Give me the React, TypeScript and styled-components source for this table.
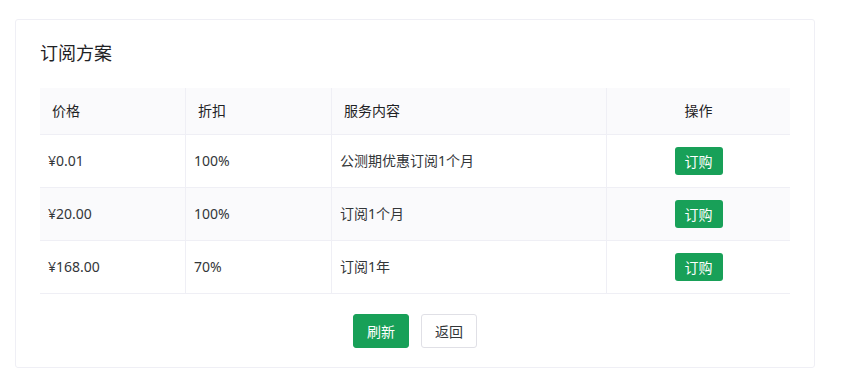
import styled, { createGlobalStyle } from 'styled-components'

interface Plan {
  price: string
  discount: string
  content: string
}

const plans: Plan[] = [
  { price: '¥0.01', discount: '100%', content: '公测期优惠订阅1个月' },
  { price: '¥20.00', discount: '100%', content: '订阅1个月' },
  { price: '¥168.00', discount: '70%', content: '订阅1年' },
]

const GlobalStyle = createGlobalStyle`
  body {
    margin: 0;
    background: #fff;
    font-family: "Noto Sans", "Noto Sans CJK SC", sans-serif;
    font-size: 14px;
    color: #333639;
  }
`

const App = () => {
  return (
    <>
      <GlobalStyle />
      <Page>
        <Card>
          <Title>订阅方案</Title>
          <Table>
            <colgroup>
              <col style={{ width: 146 }} />
              <col style={{ width: 146 }} />
              <col style={{ width: 275 }} />
              <col style={{ width: 183 }} />
            </colgroup>
            <thead>
              <tr>
                <Th>价格</Th>
                <Th>折扣</Th>
                <Th>服务内容</Th>
                <Th center>操作</Th>
              </tr>
            </thead>
            <tbody>
              {plans.map((plan, i) => (
                <Row key={plan.price} striped={i % 2 === 1}>
                  <Td>{plan.price}</Td>
                  <Td>{plan.discount}</Td>
                  <Td>{plan.content}</Td>
                  <Td center>
                    <SmallButton>订购</SmallButton>
                  </Td>
                </Row>
              ))}
            </tbody>
          </Table>
          <Footer>
            <Button primary>刷新</Button>
            <Button>返回</Button>
          </Footer>
        </Card>
      </Page>
    </>
  )
}

const Page = styled.div`
  padding: 19px 0 0 15px;
`

const Card = styled.div`
  width: 800px;
  box-sizing: border-box;
  border: 1px solid #efeff5;
  border-radius: 3px;
  padding: 19px 24px 19px;
  background: #fff;
`

const Title = styled.div`
  font-size: 18px;
  line-height: 1.6;
  color: #1f2225;
  margin-bottom: 20px;
`

const Table = styled.table`
  width: 750px;
  table-layout: fixed;
  border-collapse: separate;
  border-spacing: 0;
`

const Th = styled.th<{ center?: boolean }>`
  background: #fafafc;
  font-weight: 400;
  color: #1f2225;
  line-height: 22px;
  padding: 12px;
  text-align: ${props => (props.center ? 'center' : 'left')};
  border-bottom: 1px solid #efeff5;
  border-right: 1px solid #efeff5;

  &:last-child {
    border-right: none;
  }
`

const Row = styled.tr<{ striped?: boolean }>`
  background: ${props => (props.striped ? '#fafafc' : '#fff')};
`

const Td = styled.td<{ center?: boolean }>`
  line-height: 22px;
  padding: 12px 8px;
  text-align: ${props => (props.center ? 'center' : 'left')};
  border-bottom: 1px solid #efeff5;
  border-right: 1px solid #efeff5;

  &:last-child {
    border-right: none;
  }
`

const SmallButton = styled.button`
  height: 28px;
  padding: 0 10px;
  border: none;
  border-radius: 3px;
  background: #18a058;
  color: #fff;
  font-family: inherit;
  font-size: 14px;
  vertical-align: middle;
`

const Footer = styled.div`
  display: flex;
  justify-content: center;
  gap: 12px;
  padding-top: 20px;
`

const Button = styled.button<{ primary?: boolean }>`
  height: 34px;
  padding: 0 13px;
  box-sizing: border-box;
  border-radius: 3px;
  border: 1px solid ${props => (props.primary ? '#18a058' : '#e0e0e6')};
  background: ${props => (props.primary ? '#18a058' : '#fff')};
  color: ${props => (props.primary ? '#fff' : '#333639')};
  font-family: inherit;
  font-size: 14px;
`

export default App
